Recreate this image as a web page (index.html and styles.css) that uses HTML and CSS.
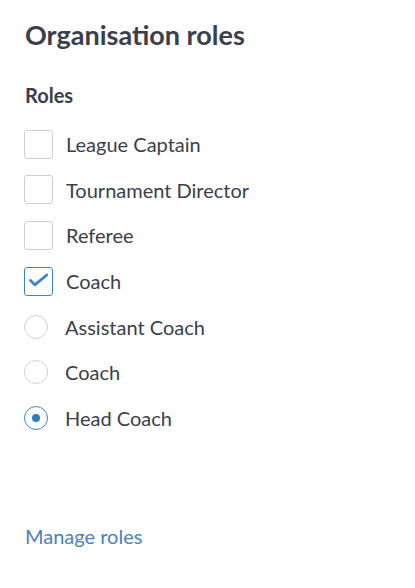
FILE: index.html
```html
<!DOCTYPE html>
<html>
<head>
<meta charset="utf-8">
<link rel="stylesheet" href="styles.css">
</head>
<body>
<div class="panel">
  <h1 class="title">Organisation roles</h1>
  <h2 class="subtitle">Roles</h2>
  <ul class="roles">
    <li class="role"><span class="box"></span><span class="label">League Captain</span></li>
    <li class="role"><span class="box"></span><span class="label">Tournament Director</span></li>
    <li class="role"><span class="box"></span><span class="label">Referee</span></li>
    <li class="role"><span class="box checked"><svg viewBox="0 0 29 29" width="29" height="29"><path d="M6.5 13.5 L10.8 17.8 L22.8 8" fill="none" stroke="#3d86c6" stroke-width="2.8" stroke-linecap="round" stroke-linejoin="round"/></svg></span><span class="label">Coach</span></li>
    <li class="role radio-row"><span class="radio"></span><span class="label">Assistant Coach</span></li>
    <li class="role radio-row"><span class="radio"></span><span class="label">Coach</span></li>
    <li class="role radio-row"><span class="radio selected"></span><span class="label">Head Coach</span></li>
  </ul>
  <a class="manage" href="#">Manage roles</a>
</div>
</body>
</html>
```
FILE: styles.css
```css
html, body {
  margin: 0;
  padding: 0;
  background: #ffffff;
}
body {
  font-family: Lato, "Open Sans", sans-serif;
  color: #3b3e4c;
  width: 415px;
  height: 588px;
}
.panel {
  padding: 19px 25px 0 25px;
  display: flex;
  flex-direction: column;
  height: 588px;
  box-sizing: border-box;
}
.title {
  margin: 0;
  font-size: 27px;
  font-weight: 700;
  line-height: 32px;
}
.subtitle {
  margin: 32px 0 0 0;
  font-size: 20px;
  font-weight: 700;
  line-height: 24px;
}
.roles {
  list-style: none;
  margin: 22.5px 0 0 0;
  padding: 0;
  display: flex;
  flex-direction: column;
  gap: 16.7px;
}
.role {
  display: flex;
  align-items: center;
  height: 29px;
  font-size: 20px;
}
.box {
  width: 29px;
  height: 29px;
  box-sizing: border-box;
  border: 1px solid #cfcfcf;
  border-radius: 3px;
  margin-left: -1px;
  margin-right: 13px;
  position: relative;
}
.box.checked {
  border-color: #3d86c6;
}
.box svg {
  display: block;
  position: absolute;
  left: -1px;
  top: -1px;
}
.radio {
  width: 24px;
  height: 24px;
  box-sizing: border-box;
  border: 1px solid #cfcfcf;
  border-radius: 50%;
  margin-left: -1px;
  margin-right: 17px;
  display: flex;
  align-items: center;
  justify-content: center;
}
.radio.selected {
  border: 1.5px solid #3d86c6;
}
.radio.selected::after {
  content: "";
  width: 8px;
  height: 8px;
  border-radius: 50%;
  background: #2f7bc0;
}
.manage {
  margin-top: auto;
  margin-bottom: 40px;
  font-size: 20px;
  color: #4a80c4;
  text-decoration: none;
  line-height: 24px;
}
```
